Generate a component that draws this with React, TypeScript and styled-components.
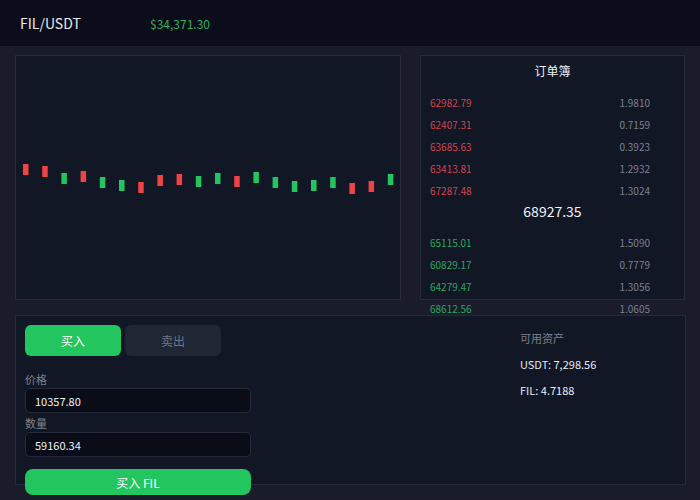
import React from 'react'
import styled, { createGlobalStyle } from 'styled-components'

const GlobalStyle = createGlobalStyle`
  html, body {
    margin: 0;
    padding: 0;
    background: #1a1b2b;
    font-family: "Noto Sans CJK SC", "Noto Sans", sans-serif;
    color: #e5e7eb;
  }
  * {
    box-sizing: border-box;
  }
`

const Page = styled.div`
  width: 700px;
  height: 500px;
  overflow: hidden;
`

const Header = styled.header`
  height: 46px;
  background: #0b0e1a;
  display: flex;
  align-items: center;
  padding: 0 20px;
`

const Pair = styled.div`
  width: 130px;
  font-size: 14px;
  color: #e8eaef;
`

const LastPrice = styled.div`
  font-size: 12px;
  color: #2fae5c;
`

const Main = styled.main`
  padding: 9px 14px 0 15px;
  display: flex;
  flex-direction: column;
  gap: 15px;
`

const TopRow = styled.div`
  display: flex;
  gap: 19px;
  height: 245px;
`

const Panel = styled.section`
  background: #121726;
  border: 1px solid #262b3b;
`

const ChartPanel = styled(Panel)`
  flex: 1;
  svg {
    display: block;
  }
`

const BookPanel = styled(Panel)`
  width: 265px;
  margin-right: 1px;
  flex-shrink: 0;
`

const BookTitle = styled.div`
  text-align: center;
  font-size: 12px;
  line-height: 20px;
  padding: 5px 0 11px;
  color: #eceef2;
`

const BookRow = styled.div<{ $side: 'ask' | 'bid' }>`
  display: flex;
  justify-content: space-between;
  padding: 0 34px 0 9px;
  font-size: 10px;
  line-height: 22px;
  span:first-child {
    color: ${p => (p.$side === 'ask' ? '#d4434b' : '#29a75b')};
  }
  span:last-child {
    color: #7a8191;
  }
`

const MidPrice = styled.div`
  text-align: center;
  font-size: 14px;
  line-height: 18px;
  padding-bottom: 12px;
  color: #f1f2f5;
`

const TradePanel = styled(Panel)`
  height: 170px;
  padding: 9px;
  display: flex;
  justify-content: space-between;
`

const Form = styled.div`
  width: 226px;
  display: flex;
  flex-direction: column;
  flex-shrink: 0;
  & > * {
    flex-shrink: 0;
  }
`

const Tabs = styled.div`
  display: flex;
  gap: 4px;
  margin-bottom: 15px;
`

const Tab = styled.button<{ $active?: boolean }>`
  width: 96px;
  height: 31px;
  border: none;
  border-radius: 6px;
  font-family: inherit;
  font-size: 12px;
  background: ${p => (p.$active ? '#22c55e' : '#1f2634')};
  color: ${p => (p.$active ? '#ffffff' : '#6f7584')};
  padding: 0;
`

const Label = styled.label`
  font-size: 11px;
  line-height: 16px;
  color: #7b808d;
  margin-bottom: 1px;
`

const Input = styled.input`
  height: 25px;
  width: 100%;
  background: #0a0d17;
  border: 1px solid #242a39;
  border-radius: 5px;
  padding: 0 9px;
  font-family: inherit;
  font-size: 11px;
  color: #eef0f4;
  outline: none;
  margin-bottom: 2px;
`

const Submit = styled.button`
  margin-top: 10px;
  height: 26px;
  width: 100%;
  border: none;
  border-radius: 8px;
  background: #22c55e;
  color: #ffffff;
  font-family: inherit;
  font-size: 12px;
  padding: 0;
`

const Assets = styled.div`
  width: 156px;
  display: flex;
  flex-direction: column;
  gap: 10px;
  padding-top: 5px;
`

const AssetTitle = styled.div`
  font-size: 11px;
  line-height: 16px;
  color: #7b808d;
`

const AssetLine = styled.div`
  font-size: 11px;
  line-height: 16px;
  color: #e8eaef;
`

const candles: { y: number; up: boolean }[] = [
  { y: 108, up: false },
  { y: 110, up: false },
  { y: 117, up: true },
  { y: 115, up: false },
  { y: 121, up: true },
  { y: 124, up: true },
  { y: 126, up: false },
  { y: 119, up: false },
  { y: 118, up: false },
  { y: 120, up: true },
  { y: 117, up: true },
  { y: 120, up: false },
  { y: 116, up: true },
  { y: 121, up: true },
  { y: 125, up: true },
  { y: 124, up: true },
  { y: 121, up: true },
  { y: 127, up: false },
  { y: 125, up: false },
  { y: 118, up: true },
]

const asks = [
  ['62982.79', '1.9810'],
  ['62407.31', '0.7159'],
  ['63685.63', '0.3923'],
  ['63413.81', '1.2932'],
  ['67287.48', '1.3024'],
]

const bids = [
  ['65115.01', '1.5090'],
  ['60829.17', '0.7779'],
  ['64279.47', '1.3056'],
  ['68612.56', '1.0605'],
]

const Chart: React.FC = () => (
  <svg width="384" height="243" viewBox="0 0 384 243">
    {candles.map((c, i) => (
      <rect
        key={i}
        x={i * 19.2 + 7}
        y={c.y}
        width={5.5}
        height={11}
        fill={c.up ? '#22c55e' : '#ef4444'}
      />
    ))}
  </svg>
)

const App: React.FC = () => {
  return (
    <Page>
      <GlobalStyle />
      <Header>
        <Pair>FIL/USDT</Pair>
        <LastPrice>$34,371.30</LastPrice>
      </Header>

      <Main>
        <TopRow>
          <ChartPanel>
            <Chart />
          </ChartPanel>

          <BookPanel>
            <BookTitle>订单簿</BookTitle>
            {asks.map(([price, qty]) => (
              <BookRow $side="ask" key={price}>
                <span>{price}</span>
                <span>{qty}</span>
              </BookRow>
            ))}
            <MidPrice>68927.35</MidPrice>
            {bids.map(([price, qty]) => (
              <BookRow $side="bid" key={price}>
                <span>{price}</span>
                <span>{qty}</span>
              </BookRow>
            ))}
          </BookPanel>
        </TopRow>

        <TradePanel>
          <Form>
            <Tabs>
              <Tab $active>买入</Tab>
              <Tab>卖出</Tab>
            </Tabs>
            <Label>价格</Label>
            <Input defaultValue="10357.80" />
            <Label>数量</Label>
            <Input defaultValue="59160.34" />
            <Submit>买入 FIL</Submit>
          </Form>

          <Assets>
            <AssetTitle>可用资产</AssetTitle>
            <AssetLine>USDT: 7,298.56</AssetLine>
            <AssetLine>FIL: 4.7188</AssetLine>
          </Assets>
        </TradePanel>
      </Main>
    </Page>
  )
}

export default App
